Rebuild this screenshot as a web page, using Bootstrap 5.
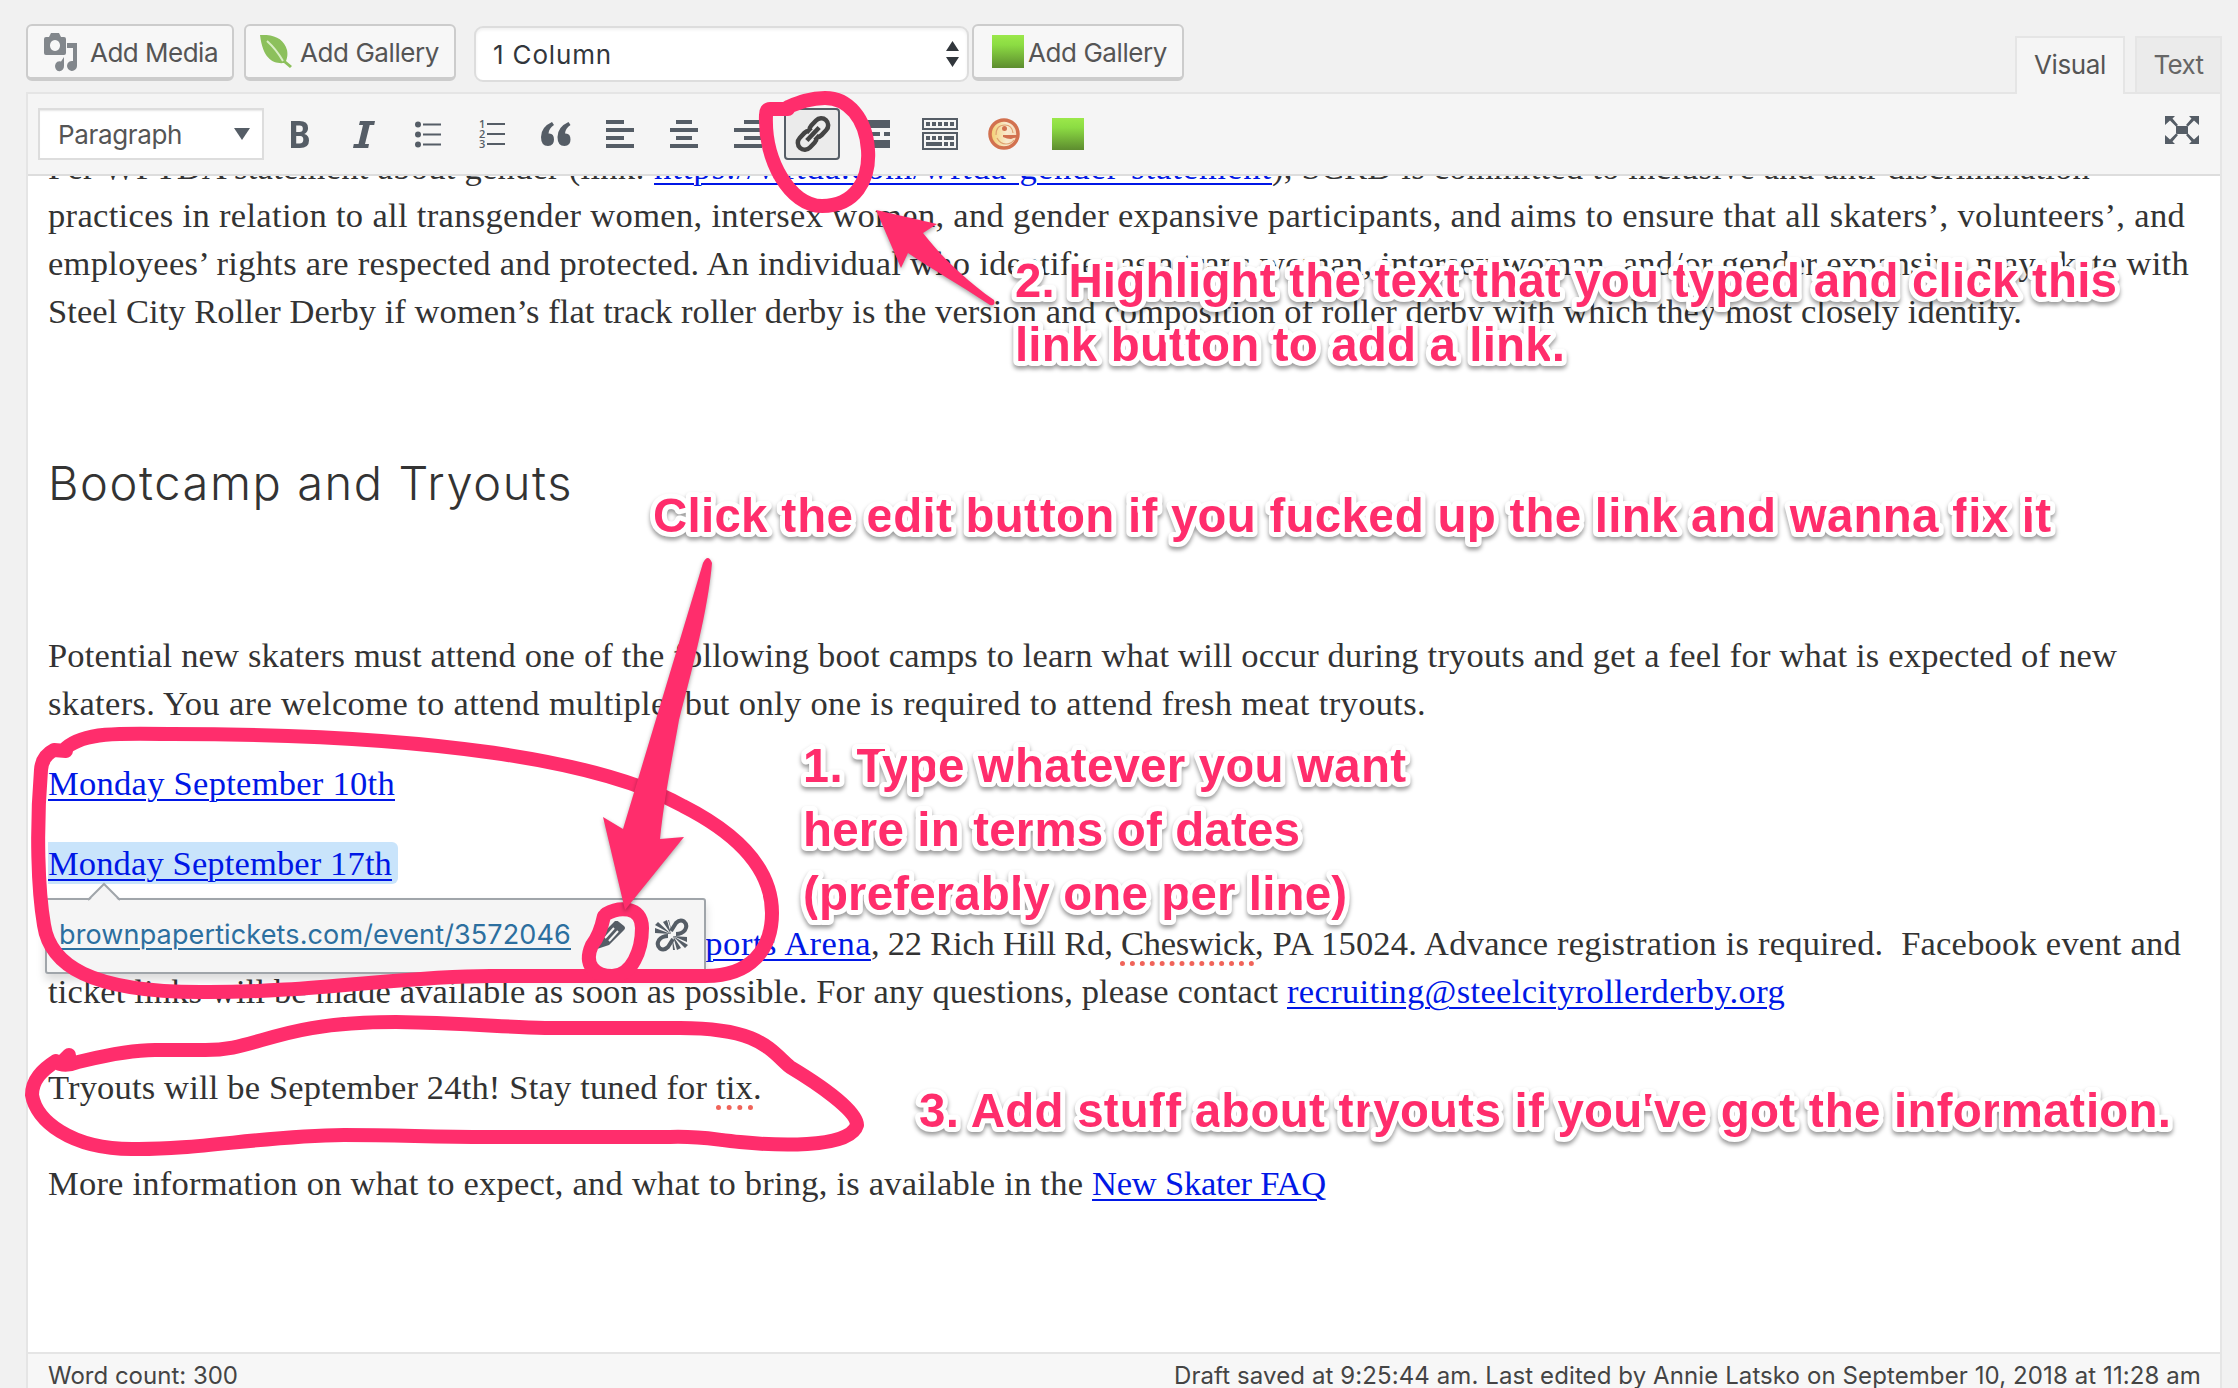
<!DOCTYPE html>
<html lang="en">
<head>
<meta charset="utf-8">
<title>Edit Page</title>
<meta name="viewport" content="width=device-width, initial-scale=1">
<link href="https://cdn.jsdelivr.net/npm/bootstrap@5.3.0/dist/css/bootstrap.min.css" rel="stylesheet">
<style>
body{background:#f1f1f1;width:2238px;height:1388px;overflow:hidden;font-family:Inter,"Noto Sans",sans-serif;font-size:26px;color:#444}
.page-wrap{padding:0 16px 0 26px;height:1388px}
.media-bar{height:92px;padding-top:24px}
.wp-button{height:57px;border:2px solid #ccc;border-bottom-width:4px;border-radius:6px;background:#f7f7f7;color:#555;line-height:1;white-space:nowrap}
.wp-button span{padding-top:2px}
.btn-media{width:208px;padding:0 0 0 16px}
.btn-leaf{width:212px;padding:0 0 0 14px;margin-left:10px}
.btn-green{width:212px;padding:0 0 0 18px}
.wp-select{height:56px;width:495px;margin:2px 3px 0 18px;border:2px solid #ddd;border-radius:9px;background:#fff;box-shadow:inset 0 2px 3px rgba(0,0,0,.06);color:#32373c;padding:0 8px 0 17px}
.tab-item{height:56px;border:2px solid #e5e5e5;border-bottom:0;background:#ebebeb;color:#666;line-height:54px;margin-top:12px;white-space:nowrap}
.tab-item.on{width:110px;background:#f5f5f5;color:#555;height:58px;margin-bottom:-2px;position:relative;z-index:1}
.tab-item.off{width:87px;margin-left:10px}
.editor{height:1296px;border:2px solid #e5e5e5;border-bottom:0;background:#fff}
.tools{height:82px;background:#f5f5f5;border-bottom:2px solid #ddd;padding-left:10px;padding-right:21px}
.format-box{width:226px;height:52px;background:#fff;border:2px solid #ddd;box-shadow:inset 0 2px 2px -1px rgba(0,0,0,.1);color:#555;padding:0 12px 0 18px;margin-right:4px}
.tool{width:64px;height:56px;color:#555d66}
.tool svg,.pop svg,.wp-button svg{display:block;flex:none}
.digit-list{font-family:"Open Sans","Noto Sans",sans-serif;font-weight:600;font-size:11px}
.doc{height:1176px;overflow:hidden;padding-left:20px;font-family:"Liberation Serif",serif;font-size:34.500px;line-height:48px;color:#333}
.doc p{margin:0;height:48px;white-space:pre}
.doc a{color:#0017e6;text-decoration-thickness:2px;text-underline-offset:4px}
.doc h2{font-family:Inter,"Liberation Sans",sans-serif;font-weight:300;font-size:47px;line-height:60px;color:#333;margin:118px 0 118px;white-space:nowrap}
.doc .first-line{margin-top:-33px}
.doc .para{margin-top:32px}
.doc .para-wide{margin-top:48px}
.picked{background:#c9e4fb;border-radius:0 6px 6px 0;padding:2px 6px 2px 0}
.typo{text-decoration:underline dotted #f0645a 5px;text-underline-offset:6px;text-decoration-skip-ink:none}
.status{height:36px;border-top:2px solid #e5e5e5;background:#f7f7f7;padding:0 19px 0 20px;font-size:24px;line-height:44px;color:#444;white-space:nowrap}
.pop{left:45px;top:898px;width:661px;height:76px;background:#f5f5f5;border:2px solid #a0a5aa;border-radius:3px;box-shadow:0 6px 10px rgba(0,0,0,.15);padding:0 15px 2px 12px;font-size:27px}
.pop a{color:#2c6f9f;text-decoration-thickness:2px;text-underline-offset:4px;white-space:nowrap}
.pop .nib{left:28px;top:-18px}
.pop .pencil{margin-left:26px}
.notes{left:0;top:0;z-index:5;pointer-events:none}
.notes text{font-family:"Liberation Sans",Arial,sans-serif;font-weight:700;font-size:47.5px;fill:#ff2d6c;stroke:#fff;stroke-width:10px;stroke-linejoin:round;paint-order:stroke;filter:drop-shadow(0 3px 2px rgba(0,0,0,.4))}
.notes .ink{fill:none;stroke:#ff2d6c;stroke-width:14;stroke-linecap:round;stroke-linejoin:round}
.notes .pointer{fill:#ff2d6c;filter:drop-shadow(0 2px 2px rgba(0,0,0,.35))}
</style>
<script src="https://cdn.jsdelivr.net/npm/bootstrap@5.3.0/dist/js/bootstrap.bundle.min.js"></script>
</head>
<body class="position-relative">
<svg width="0" height="0" class="position-absolute">
<defs><linearGradient id="grn" x1="0" y1="0" x2="0" y2="1"><stop offset="0" stop-color="#9be84a"/><stop offset=".3" stop-color="#8cdc43"/><stop offset="1" stop-color="#5d8c2f"/></linearGradient>
<linearGradient id="cream"><stop offset="0" stop-color="#f3cf6c"/><stop offset=".6" stop-color="#f8ead0"/><stop offset="1" stop-color="#f6d9b8"/></linearGradient></defs>
</svg>
<div class="page-wrap">
  <div class="media-bar d-flex align-items-start">
    <button class="wp-button btn-media d-flex align-items-center">
      <svg width="34" height="40" viewBox="0 0 34 40"><path fill="#82878c" fill-rule="evenodd" d="M2 5h3l2-4h8l2 4h3q2 0 2 2v14q0 2-2 2H2q-2 0-2-2V7q0-2 2-2zM11 8a5 5.500 0 1 0 .01 0zM23 11h10v23a5 5 0 1 1-4-5V16h-6zM20 25v9a4.500 5 0 1 1-3-4.500z"/></svg>
      <span data-w="128" class="ms-2 ps-1">Add Media</span></button>
    <button class="wp-button btn-leaf d-flex align-items-center">
      <svg width="32" height="33" viewBox="0 0 32 33"><path fill="#8cc05c" d="M0 0C14-1 24 4 27 15c1 5 0 8-1 11l6 5-2 2-6-5C14 29 3 25 0 0z"/><path d="M7 6q9 8 16 20" stroke="#d9eec5" stroke-width="2" fill="none"/></svg>
      <span class="ms-2" data-w="139">Add Gallery</span></button>
    <div class="wp-select d-flex align-items-center justify-content-between"><span data-w="119">1 Column</span>
      <svg width="13" height="26" viewBox="0 0 13 26"><path fill="#32373c" d="M0 10L6.500 0 13 10zM0 16l6.500 10L13 16z"/></svg></div>
    <button class="wp-button btn-green d-flex align-items-center">
      <svg width="32" height="33"><rect width="32" height="33" fill="url(#grn)"/></svg>
      <span class="ms-1" data-w="139">Add Gallery</span></button>
    <div class="tab-item on ms-auto text-center"><span data-w="72">Visual</span></div>
    <div class="tab-item off text-center"><span data-w="50">Text</span></div>
  </div>
  <div class="editor">
    <div class="tools d-flex align-items-center">
      <div class="format-box d-flex align-items-center justify-content-between"><span data-w="124">Paragraph</span>
        <svg width="16" height="12"><path d="M0 0h16L8 12z" fill="#555d66"/></svg></div>
      <div class="tool d-flex align-items-center justify-content-center"><svg width="18" height="27" viewBox="0 0 19 27" preserveAspectRatio="none" fill="currentColor" fill-rule="evenodd"><path d="M0 0h9q9 0 9 7 0 4-4 6 5 1 5 6.500Q19 27 9.500 27H0zM5.500 4.500v6.500H9q3.500 0 3.500-3.300T9 4.500zM5.500 15v7.500H9q4 0 4-4T9 15z"/></svg></div>
      <div class="tool d-flex align-items-center justify-content-center"><svg width="22" height="27" viewBox="0 0 22 27" fill="currentColor"><path d="M7 0h15l-.8 4h-4.500L12 23h4l-.8 4H0l.8-4h4.700L10 4H6z"/></svg></div>
      <div class="tool d-flex align-items-center justify-content-center"><svg width="26" height="27" viewBox="0 0 26 27" fill="currentColor"><path d="M8 2.500h18v2H8zM8 12.500h18v2H8zM8 22.500h18v2H8z"/><circle cx="3" cy="3.500" r="3"/><circle cx="3" cy="13.500" r="3"/><circle cx="3" cy="23.500" r="3"/></svg></div>
      <div class="tool d-flex align-items-center justify-content-center"><svg width="26" height="30" viewBox="0 0 26 30"><path fill="currentColor" d="M8 4h18v2H8zM8 14h18v2H8zM8 24h18v2H8z"/><g class="digit-list" fill="currentColor"><text x="0" y="9">1</text><text x="0" y="19">2</text><text x="0" y="29">3</text></g></svg></div>
      <div class="tool d-flex align-items-center justify-content-center"><svg width="30" height="24" viewBox="0 0 30 24" fill="currentColor"><path id="q" d="M11 0l2 3Q8 6 7.500 11.500 13 11 13 17.500 13 24 7 24 0 24 0 15 0 5 11 0z"/><use href="#q" x="16.500"/></svg></div>
      <div class="tool d-flex align-items-center justify-content-center"><svg width="28" height="28" fill="currentColor"><path d="M0 0h18v4H0zM0 8h28v4H0zM0 16h18v4H0zM0 24h28v4H0z"/></svg></div>
      <div class="tool d-flex align-items-center justify-content-center"><svg width="28" height="28" fill="currentColor"><path d="M6 0h16v4H6zM0 8h28v4H0zM6 16h16v4H6zM0 24h28v4H0z"/></svg></div>
      <div class="tool d-flex align-items-center justify-content-center"><svg width="28" height="28" fill="currentColor"><path d="M10 0h18v4H10zM0 8h28v4H0zM10 16h18v4H10zM0 24h28v4H0z"/></svg></div>
      <div class="tool d-flex align-items-center justify-content-center"><svg width="56" height="52" viewBox="0 0 56 52"><rect x="1" y="1" width="54" height="50" rx="3" fill="#ebebeb" stroke="#555d66" stroke-width="2"/><g transform="translate(29 26) rotate(-47)" fill="none" stroke="#444" stroke-width="4.500"><rect x="-19" y="-7" width="21" height="14" rx="7"/><rect x="-2" y="-7" width="21" height="14" rx="7"/><path d="M-11 0H11" stroke="#ebebeb" stroke-width="7"/><path d="M-9 0H9"/></g></svg></div>
      <div class="tool d-flex align-items-center justify-content-center"><svg width="28" height="28" fill="currentColor"><path d="M0 0h28v8H0zM0 12h6v4H0zM10 12h8v4h-8zM22 12h6v4h-6zM0 20h28v8H0z"/></svg></div>
      <div class="tool d-flex align-items-center justify-content-center"><svg width="36" height="32" viewBox="0 0 36 32"><g fill="none" stroke="currentColor" stroke-width="2"><path d="M1 1h34v10H1zM1 15h34v16H1z"/><path d="M4 6h28M4 20h18" stroke-width="4" stroke-dasharray="4 2"/><path d="M22 20h10M4 26h16" stroke-width="4"/><path d="M22 26h10" stroke-width="4" stroke-dasharray="4 2"/></g></svg></div>
      <div class="tool d-flex align-items-center justify-content-center"><svg width="32" height="32" viewBox="0 0 32 32"><circle cx="16" cy="16" r="14" fill="url(#cream)" stroke="#d2714f" stroke-width="3.500"/><path d="M15 17h14v2.500q-4 0-6 1.500-4 0-8-2z" fill="#d2714f"/><circle cx="16.500" cy="10.500" r="2.500" fill="#d2714f"/><path d="M8 17q0-10 9-10 7 0 8 8M9 20q3 6 9 6 5 0 8-4" fill="none" stroke="#dfa06f" stroke-width="1.200"/></svg></div>
      <div class="tool d-flex align-items-center justify-content-center"><svg width="32" height="32"><rect width="32" height="32" fill="url(#grn)"/></svg></div>
      <svg class="ms-auto mb-2" width="34" height="28" viewBox="0 0 34 28" fill="#555d66"><path d="M11 10h12v8H11zM0 0h10L7.500 2.500 13 9l-2 1.500-6-6L0 9zM34 0H24l2.500 2.500L21 9l2 1.500 6-6L34 9zM0 28h10l-2.500-2.500L13 19l-2-1.500-6 6L0 19zM34 28H24l2.500-2.500L21 19l2-1.500 6 6L34 19z"/></svg>
    </div>
    <div class="doc">
      <p class="first-line"><span data-w="606">Per WFTDA statement about gender (link: </span><a href="#" data-w="618">https://wftda.com/wftda-gender-statement</a><span data-w="818">), SCRD is committed to inclusive and anti-discrimination</span></p>
      <p><span data-w="2137">practices in relation to all transgender women, intersex women, and gender expansive participants, and aims to ensure that all skaters’, volunteers’, and</span></p>
      <p><span data-w="2141">employees’ rights are respected and protected. An individual who identifies as a trans woman, intersex woman, and/or gender expansive may skate with</span></p>
      <p><span data-w="1974">Steel City Roller Derby if women’s flat track roller derby is the version and composition of roller derby with which they most closely identify.</span></p>
      <h2><span data-w="525">Bootcamp and Tryouts</span></h2>
      <p><span data-w="2069">Potential new skaters must attend one of the following boot camps to learn what will occur during tryouts and get a feel for what is expected of new</span></p>
      <p><span data-w="1378">skaters. You are welcome to attend multiple, but only one is required to attend fresh meat tryouts.</span></p>
      <p class="para"><a href="#" data-w="347">Monday September 10th</a></p>
      <p class="para"><span class="picked"><a href="#" data-w="344">Monday September 17th</a></span></p>
      <p class="para"><span data-w="378">All tryouts held at the </span><a href="#" data-w="445">Pittsburgh Indoor Sports Arena</a><span data-w="250">, 22 Rich Hill Rd, </span><span class="typo" data-w="134">Cheswick</span><span data-w="926">, PA 15024. Advance registration is required.  Facebook event and</span></p>
      <p><span data-w="1239">ticket links will be made available as soon as possible. For any questions, please contact </span><a href="#" data-w="498">recruiting@steelcityrollerderby.org</a></p>
      <p class="para-wide"><span data-w="668">Tryouts will be September 24th! Stay tuned for </span><span class="typo" data-w="37">tix</span>.</p>
      <p class="para-wide"><span data-w="1044">More information on what to expect, and what to bring, is available in the </span><a href="#" data-w="234">New Skater FAQ</a></p>
    </div>
    <div class="status d-flex justify-content-between"><span data-w="190">Word count: 300</span><span data-w="1027">Draft saved at 9:25:44 am. Last edited by Annie Latsko on September 10, 2018 at 11:28 am</span></div>
  </div>
</div>
<div class="pop position-absolute d-flex align-items-center">
  <svg class="nib position-absolute" width="58" height="20" viewBox="0 0 58 20"><path d="M13 20L29 2l16 18z" fill="#f5f5f5"/><path d="M13 18L29 2l16 16" fill="none" stroke="#a0a5aa" stroke-width="2"/></svg>
  <a href="#" data-w="512">brownpapertickets.com/event/3572046</a>
  <svg class="pencil" width="28" height="28" viewBox="0 0 28 28"><path fill="#555d66" d="M18 0q2-1 4 1l5 4q2 2 0 4L12 24 0 28l3-13z"/><path d="M17 7L8 17M21 10L12 20" stroke="#f5f5f5" stroke-width="2"/></svg>
  <svg class="ms-auto" width="34" height="34" viewBox="0 0 34 34"><g fill="none" stroke="#555d66" stroke-width="4"><path d="M16 13L21 5q4-4 8-1.500 4 3.500 1 8.500-3 4-9 4"/><path d="M18 21l-5 8q-4 4-8 1.500-4-3.500-1-8.500 3-4 9-4"/></g><path fill="#555d66" d="M16 16L8 4l4-2zM16 16L0 7l3-3zM16 16L0 15v-5zM17 15L14 2h-1zM18 18l8 12-4 2zM18 18l15 9-3 3zM18 18l14 1v5zM17 19l3 13h-2z"/></svg>
</div>
<svg class="notes position-absolute" width="2238" height="1388" viewBox="0 0 2238 1388">
  <path class="ink" d="M788 109H770Q766 109 766 115C764 160 790 206 822 206C855 206 870 180 868 150C866 118 848 98 825 98C810 98 798 103 788 107"/>
  <path class="pointer" d="M876 210L937 224L923 233C940 255 965 280 994 300Q996 306 990 305C960 285 930 268 908 253L901 268z"/>
  <path class="ink" d="M66 751L54 750Q42 756 41 770C36 830 38 890 44 925C50 965 90 992 200 992C310 993 400 976 490 976H706C750 976 772 950 772 913C772 870 740 835 683 806C600 760 430 734 172 734C120 733 84 732 66 748"/>
  <path class="ink" d="M604 916Q600 935 592 945C583 965 595 976 612 976C632 976 642 950 642 928C642 905 618 907 606 914"/>
  <path class="pointer" d="M703 563Q708 553 712 563C708 610 692 670 679 720C671 765 664 800 660 839L684 837L625 910L603 817L623 829Z"/>
  <path class="ink" d="M69 1055L60 1064Q68 1066 78 1062C95 1058 125 1050 155 1050H200C260 1052 270 1022 396 1022C470 1023 500 1027 545 1028H680C760 1028 770 1050 790 1067C815 1082 857 1110 857 1125C850 1150 770 1145 740 1142C710 1139 700 1136 670 1137H488C430 1137 400 1135 344 1135C260 1136 200 1150 132 1149C70 1149 36 1120 32 1095C32 1080 42 1070 56 1061"/>
  <text x="1015" y="297" textLength="1102">2. Highlight the text that you typed and click this</text>
  <text x="1015" y="361" textLength="550">link button to add a link.</text>
  <text x="653" y="532" textLength="1398">Click the edit button if you fucked up the link and wanna fix it</text>
  <text x="803" y="782" textLength="603">1. Type whatever you want</text>
  <text x="803" y="846" textLength="497">here in terms of dates</text>
  <text x="803" y="910" textLength="544">(preferably one per line)</text>
  <text x="919" y="1127" textLength="1252">3. Add stuff about tryouts if you've got the information.</text>
</svg>
<script>
// Track each run of text to the measure given in its data-w attribute.
document.querySelectorAll('[data-w]').forEach(function (el) {
  var range = document.createRange();
  range.selectNodeContents(el);
  var w = range.getBoundingClientRect().width;
  el.style.letterSpacing = ((el.dataset.w - w) / el.textContent.length).toFixed(3) + 'px';
});
</script>
</body>
</html>
